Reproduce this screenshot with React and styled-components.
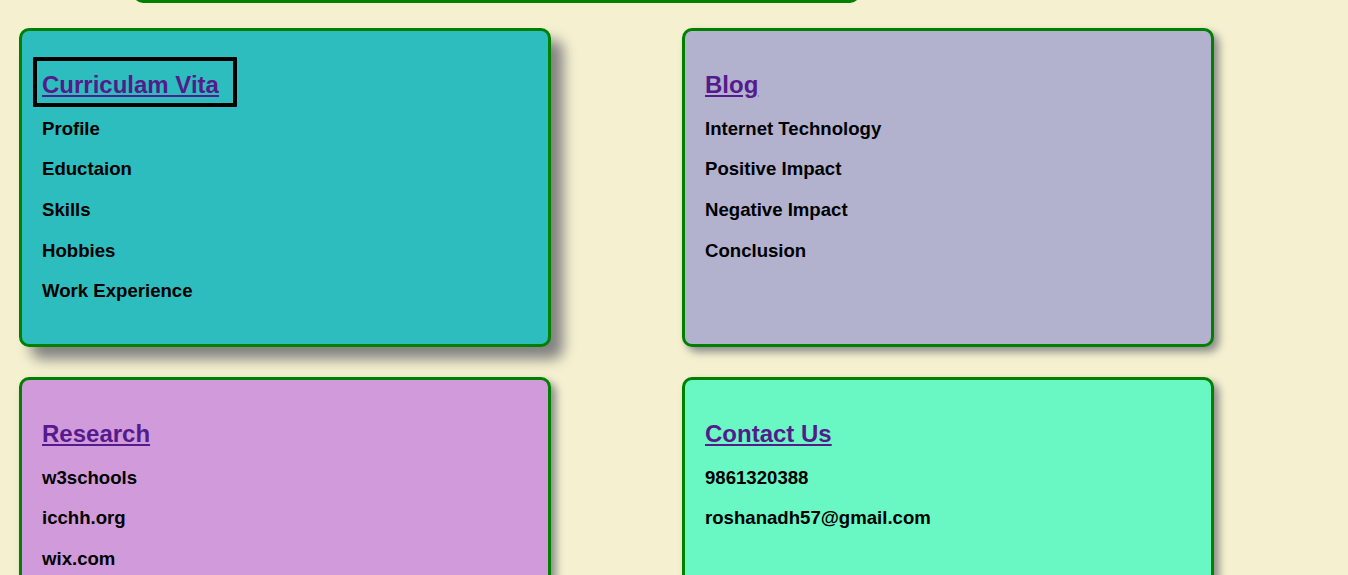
import React from "react";
import styled, { createGlobalStyle } from "styled-components";

const GlobalStyle = createGlobalStyle`
  html, body {
    margin: 0;
    padding: 0;
    background: #f5f1d0;
    font-family: "Liberation Sans", Arial, sans-serif;
    overflow: hidden;
  }
`;

const Page = styled.div`
  padding: 0 0 0 19px;
`;

const Banner = styled.div`
  width: 727px;
  height: 200px;
  margin: -197px 0 25px 114px;
  box-sizing: border-box;
  background: #3b2a12;
  border: 3px solid #008000;
  border-radius: 10px;
`;

const Grid = styled.div`
  display: grid;
  grid-template-columns: 532px 532px;
  column-gap: 131px;
  row-gap: 30px;
`;

const Card = styled.section`
  box-sizing: border-box;
  height: 319px;
  padding: 40px 20px 20px;
  background: ${(p) => p.$bg};
  border: 3px solid #008000;
  border-radius: 10px;
  box-shadow: ${(p) => (p.$active ? "12px 12px 14px #808080" : "5px 5px 9px #8a8a8a")};
`;

const Title = styled.h2`
  margin: 0 0 20px;
  font-size: 24px;
  font-weight: bold;
  line-height: 27.6px;
`;

const TitleLink = styled.a`
  position: relative;
  color: #551a8b;
  text-decoration: underline;

  ${(p) =>
    p.$boxed &&
    `
    &::after {
      content: "";
      position: absolute;
      top: -14px;
      left: -9px;
      right: -18px;
      bottom: -9px;
      border: 4px solid #000;
      border-radius: 1px;
    }
  `}
`;

const List = styled.ul`
  list-style: none;
  margin: 0;
  padding: 0;
  display: flex;
  flex-direction: column;
  gap: 20px;
`;

const Item = styled.li`
  font-size: 18.6px;
  font-weight: bold;
  line-height: 20.7px;
  color: #000;
`;

const cards = [
  {
    title: "Curriculam Vita",
    bg: "#2ebdbe",
    active: true,
    items: ["Profile", "Eductaion", "Skills", "Hobbies", "Work Experience"],
  },
  {
    title: "Blog",
    bg: "#b2b2cf",
    items: ["Internet Technology", "Positive Impact", "Negative Impact", "Conclusion"],
  },
  {
    title: "Research",
    bg: "#d19bdb",
    items: ["w3schools", "icchh.org", "wix.com"],
  },
  {
    title: "Contact Us",
    bg: "#69f8c4",
    items: ["9861320388", "roshanadh57@gmail.com"],
  },
];

export default function App() {
  return (
    <>
      <GlobalStyle />
      <Page>
        <Banner />
        <Grid>
          {cards.map((c) => (
            <Card key={c.title} $bg={c.bg} $active={c.active}>
              <Title>
                <TitleLink href="#" $boxed={c.active}>
                  {c.title}
                </TitleLink>
              </Title>
              <List>
                {c.items.map((i) => (
                  <Item key={i}>{i}</Item>
                ))}
              </List>
            </Card>
          ))}
        </Grid>
      </Page>
    </>
  );
}
